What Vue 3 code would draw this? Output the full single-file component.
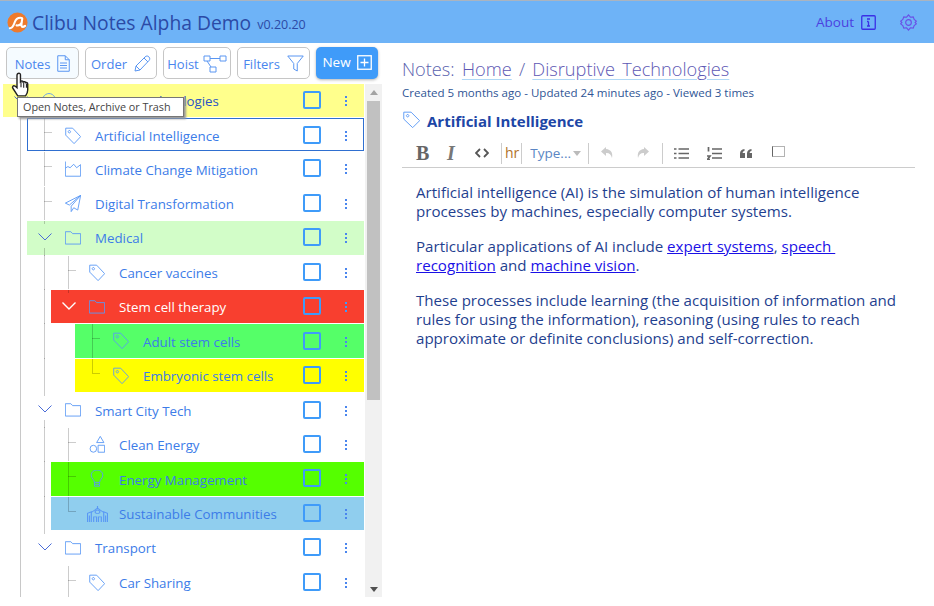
<script setup>
const icons = {
  tag: ['M2 2.500h9.500L22.500 13.500 13.500 22.500 2 11.500z', 'M7 5.500a1.600 1.600 0 1 0 .01 0z'],
  target: ['M12 3a9 9 0 1 0 .01 0z', 'M12 8a4 4 0 1 0 .01 0z'],
  chart: ['M1.500 3v19h21V7l-5.500 4-4-4.500-5 4.500-3-1.500-3.500 2'],
  plane: ['M22.500 1.500 1.500 11.500l5.500 2.500L22.500 1.500 9.500 15.500v7l3.500-5 5.500 3z'],
  folder: ['M1.500 4.500h7.500l2.500 2.500h11v13.500h-21z'],
  shapes: ['M16.500 1.500l5 8h-10z', 'M13.500 13h9v9h-9z', 'M11.500 17.500a4.500 4.500 0 1 1-9 0 4.500 4.500 0 0 1 9 0z'],
  bulb: ['M8.500 17C8.500 14 4 12 4 7.500a8 6.500 0 0 1 16 0C20 12 15.500 14 15.500 17z', 'M8.500 17v5h7v-5', 'M8.500 19.500h7'],
  city: ['M1.500 23V11l4-2v14', 'M22.500 23V11l-4-2v14', 'M5.500 10 12 4l6.500 6', 'M8 23v-7h3v7', 'M13 23v-7h3v7', 'M12 6.500a2.500 2.500 0 1 0 .01 0z', 'M3.500 14v9', 'M20.500 14v9', 'M12 1v3']
}

const rows = [
  { text: 'Disruptive Technologies', level: 0, icon: 'target', chevron: true, bg: '#ffff8c', dark: true },
  { text: 'Artificial Intelligence', level: 1, icon: 'tag', selected: true },
  { text: 'Climate Change Mitigation', level: 1, icon: 'chart' },
  { text: 'Digital Transformation', level: 1, icon: 'plane' },
  { text: 'Medical', level: 1, icon: 'folder', chevron: true, bg: '#d2fdc8', resume: true },
  { text: 'Cancer vaccines', level: 2, icon: 'tag', rails: [1] },
  { text: 'Stem cell therapy', level: 2, icon: 'folder', chevron: true, bg: '#f83f2f', light: true, rails: [1] },
  { text: 'Adult stem cells', level: 3, icon: 'tag', bg: '#55ff68', rails: [1] },
  { text: 'Embryonic stem cells', level: 3, icon: 'tag', bg: '#ffff00', last: true, rails: [1] },
  { text: 'Smart City Tech', level: 1, icon: 'folder', chevron: true, resume: true },
  { text: 'Clean Energy', level: 2, icon: 'shapes', rails: [1] },
  { text: 'Energy Management', level: 2, icon: 'bulb', bg: '#55ff00', rails: [1] },
  { text: 'Sustainable Communities', level: 2, icon: 'city', bg: '#90ceee', last: true, rails: [1] },
  { text: 'Transport', level: 1, icon: 'folder', chevron: true },
  { text: 'Car Sharing', level: 2, icon: 'tag' }
]

const railLeft = (rail, level) => 17 + 24 * (rail - level) + 'px'

const tools = [
  { label: 'Notes', cls: 'w-notes', active: true },
  { label: 'Order', cls: 'w-order' },
  { label: 'Hoist', cls: 'w-hoist' },
  { label: 'Filters', cls: 'w-filters' }
]
</script>

<template>
  <div class="page">
    <header class="topbar">
      <svg class="logo" viewBox="0 0 22 22" aria-hidden="true">
        <circle cx="11" cy="11" r="10.500" fill="#ee7a2c" />
        <path d="M3 17c3 0 4-3 5-6 1-3 3-5 6-5 1 0 2 .3 2 1-.5 3-1 6-.8 7.500.2 1.500 2 1.500 3.800 0M15.500 11c-1 2-3 3.500-5.500 3" fill="none" stroke="#fff" stroke-width="2.200" stroke-linecap="round" />
      </svg>
      <h1 class="brand">Clibu Notes Alpha Demo</h1>
      <span class="version">v0.20.20</span>
      <span class="about">About</span>
      <svg class="info" viewBox="0 0 15 15" aria-hidden="true">
        <rect x=".75" y=".75" width="13.500" height="13.500" rx="1" />
        <path d="M6 4h3M7.500 6.500V11M6 6.500h1.500M6 11h3" />
      </svg>
      <svg class="gear" viewBox="0 0 18 18" aria-hidden="true">
        <path d="M9 1l2 2.400 3-.3 1 2.700 2.300 1.800L16 9l1.300 1.400L15 12.200l-1 2.700-3-.3L9 17l-2-2.400-3 .3-1-2.700L.7 10.400 2 9 .7 7.600 3 5.800l1-2.700 3 .3z" />
        <circle cx="9" cy="9" r="3" />
      </svg>
    </header>

    <main class="main">
      <aside class="side">
        <nav class="toolbar">
          <button v-for="t in tools" :key="t.label" class="tool" :class="[t.cls, { active: t.active }]">
            <span>{{ t.label }}</span>
            <svg v-if="t.label === 'Notes'" class="tool-ico doc" viewBox="0 0 13 17"><path d="M.75.750h7.500l4 4v11.500H.750zM8.250.750v4h4M3 8h7M3 10.500h7M3 13h7" /></svg>
            <svg v-else-if="t.label === 'Order'" class="tool-ico pen" viewBox="0 0 17 17"><path d="M1 16l1-5L11 2c1.500-1.500 3-1.200 4 0s1 2.500 0 3.500L6 15zM2 11l4 4M10 3l4 4" /></svg>
            <svg v-else-if="t.label === 'Hoist'" class="tool-ico hoist" viewBox="0 0 24 18"><path d="M1 1h6v5H1zM17 1h6v5h-6zM7 12h6v5H7zM7 3.500h10M4 6l4 6" /></svg>
            <svg v-else class="tool-ico funnel" viewBox="0 0 17 17"><path d="M.750 1h15.500l-6 7.500v7.500l-3.500-2V8.500z" /></svg>
          </button>
          <button class="new">
            <span>New</span>
            <svg class="plus" viewBox="0 0 15 15"><rect x=".75" y=".75" width="13.500" height="13.500" /><path d="M7.500 3.500v8M3.500 7.500h8" /></svg>
          </button>
        </nav>

        <div class="tree-wrap">
          <div class="tree">
            <div
              v-for="r in rows"
              :key="r.text"
              class="row"
              :class="['lv' + r.level, { selected: r.selected, light: r.light, dark: r.dark, last: r.last, parent: r.chevron }]"
              :style="r.bg ? { background: r.bg } : null"
            >
              <i v-for="rail in r.rails" :key="rail" class="rail" :style="{ left: railLeft(rail, r.level) }"></i>
              <i v-if="r.level > 0" class="guide"></i>
              <i v-if="r.resume" class="resume"></i>
              <i v-if="r.level > 0 && !r.chevron" class="tick"></i>
              <svg v-if="r.chevron" class="chev" viewBox="0 0 14 8"><path d="M.5.500 7 7l6.500-6.500" /></svg>
              <svg class="ico" :class="r.icon" viewBox="1 1 22 22" preserveAspectRatio="none"><path v-for="d in icons[r.icon]" :key="d" :d="d" /></svg>
              <span class="label">{{ r.text }}</span>
              <span class="check"></span>
              <span class="kebab"><b></b><b></b><b></b></span>
            </div>
          </div>
          <div class="scrollbar">
            <i class="arrow up"></i>
            <div class="thumb"></div>
            <i class="arrow down"></i>
          </div>
          <div class="tip">Open Notes, Archive or Trash</div>
        </div>
        <svg class="hand" viewBox="0 0 18 24" aria-hidden="true">
          <path d="M6 1.500c1-.8 2.500-.3 2.500 1V9l.5-.5c1-.5 2 0 2 .7 1-.6 2-.2 2.200.6 1-.4 2 0 2 1.200v5.500c0 2.500-1 4-2 5.500H6L1.500 15c-1-1.500.5-3 2-2l1.800 1.500V3c0-.6.200-1.100.7-1.500z" fill="#fff" stroke="#222" stroke-width="1.300" />
          <path d="M9 9v5M11.500 9.500v5M14 10.500v4" stroke="#222" fill="none" />
        </svg>
      </aside>

      <section class="content">
        <h2 class="crumb">Notes: <a>Home</a> / <a>Disruptive Technologies</a></h2>
        <p class="meta">Created 5 months ago - Updated 24 minutes ago - Viewed 3 times</p>
        <div class="note-title">
          <svg class="note-ico" viewBox="1 1 22 22"><path v-for="d in icons.tag" :key="d" :d="d" /></svg>
          <strong>Artificial Intelligence</strong>
        </div>
        <div class="editbar">
          <span class="e-b">B</span>
          <span class="e-i">I</span>
          <svg class="e-code" viewBox="0 0 14 10"><path d="M5 1 1 5l4 4M9 1l4 4-4 4" /></svg>
          <span class="sep s1"></span>
          <span class="e-hr">hr</span>
          <span class="sep"></span>
          <span class="e-type">Type...<i class="caret"></i></span>
          <span class="sep"></span>
          <svg class="e-hist undo" viewBox="0 0 14 14"><path d="M6 1 1 5.500 6 10V7c3-.3 5 1 6 5 1-5-1-8.500-6-9z" /></svg>
          <svg class="e-hist redo" viewBox="0 0 14 14"><path d="M8 1l5 4.500L8 10V7c-3-.3-5 1-6 5-1-5 1-8.500 6-9z" /></svg>
          <span class="sep s2"></span>
          <svg class="e-list" viewBox="0 0 15 11"><path d="M0 1h2.500M4.500 1H15M0 5.500h2.500M4.500 5.500H15M0 10h2.500M4.500 10H15" /></svg>
          <svg class="e-list ol" viewBox="0 0 15 13"><path d="M5 2h10M5 6.500h10M5 11h10M1.500 0v4.500M0 9h3L.5 12.500H3" /></svg>
          <svg class="e-quote" viewBox="0 0 12 9"><path d="M0 9V4.500C0 2 1.500.5 4.500 0v2C3 2.300 2.700 3 2.700 4h2.300v5zM7 9V4.500C7 2 8.500.5 11.500 0v2C10 2.300 9.700 3 9.700 4H12v5z" /></svg>
          <svg class="e-box" viewBox="0 0 13 11"><path d="M.5.500h12v10H.5z" stroke-dasharray="1 1" /><path d="M.5.500v10" /></svg>
        </div>
        <article class="body">
          <p>Artificial intelligence (AI) is the simulation of human intelligence<br />processes by machines, especially computer systems.</p>
          <p>Particular applications of AI include <a>expert systems</a>, <a>speech <br />recognition</a> and <a>machine vision</a>.</p>
          <p>These processes include learning (the acquisition of information and<br />rules for using the information), reasoning (using rules to reach<br />approximate or definite conclusions) and self-correction.</p>
        </article>
      </section>
    </main>
  </div>
</template>

<style>
html, body { margin: 0; background: #fff; }
</style>

<style scoped>
* { box-sizing: border-box; }
.page { width: 934px; height: 606px; overflow: hidden; font-family: "Open Sans", "Liberation Sans", sans-serif; background: #fff; position: relative; }

.topbar { height: 43px; background: #6eb3f7; border-top: 1px solid #aab4c0; display: flex; align-items: center; padding: 0 17px 0 7px; }
.logo { width: 21px; height: 21px; margin-right: 4px; flex: none; }
.brand { margin: 0; font-size: 19.300px; font-weight: 400; color: #2b4aa6; white-space: nowrap; }
.version { font-size: 12.500px; color: #2b4aa6; margin: 4px 0 0 6px; }
.about { margin-left: auto; font-size: 13.500px; color: #4b3fe0; }
.info { width: 15px; height: 15px; margin-left: 7px; fill: none; stroke: #3a30e6; stroke-width: 1.300; }
.gear { width: 17px; height: 17px; margin-left: 24px; fill: none; stroke: #6a50e6; stroke-width: 1.200; }

.main { display: flex; height: 563px; }
.side { width: 385px; flex: none; position: relative; padding: 4px 0 0 3px; }

.toolbar { display: flex; gap: 6px; padding-left: 3px; height: 32px; }
.tool { height: 32px; border: 1px solid #c6c6c6; border-radius: 5px; background: #fff; display: flex; align-items: center; justify-content: center; gap: 7px; padding: 1px 0 0; font: 13px "Open Sans", sans-serif; color: #4a86ee; }
.tool.active { background: #f5fbff; }
.w-notes { width: 73px; }
.w-order { width: 72px; }
.w-hoist { width: 68px; }
.w-filters { width: 73px; }
.tool-ico { flex: none; fill: none; stroke: #5a96f2; stroke-width: 1; }
.doc { width: 13px; height: 17px; }
.pen { width: 17px; height: 17px; }
.hoist { width: 24px; height: 18px; margin-left: -3px; }
.funnel { width: 17px; height: 17px; }
.new { width: 62px; height: 32px; border: 0; border-radius: 5px; background: #3f9bf9; box-shadow: 0 1px 3px rgba(0,0,0,.3); color: #fff; font: 13.500px "Open Sans", sans-serif; display: flex; align-items: center; justify-content: center; gap: 6px; padding: 0 0 2px; }
.plus { width: 15px; height: 15px; fill: none; stroke: #fff; stroke-width: 1.300; }

.tree-wrap { display: flex; margin-top: 5px; height: 513px; position: relative; }
.tree { width: 361px; height: 513px; overflow: hidden; position: relative; }
.tree::before { content: ""; position: absolute; left: 17px; top: 0; bottom: 0; width: 1px; background: #c8c8c8; }

.row { position: relative; height: 33.400px; margin-bottom: 1.050px; display: flex; align-items: center; font-size: 13.300px; color: #3c7ce8; z-index: 0; }
.lv0 { margin-left: 0; }
.lv1 { margin-left: 24px; }
.lv2 { margin-left: 48px; }
.lv3 { margin-left: 72px; }
.selected { border: 1px solid #2f6fd0; margin-top: .6px; height: 32.800px; }
.light { color: #fff; }
.dark { color: #2b54c4; }

.rail, .guide, .resume { position: absolute; width: 1px; background: rgba(0,0,0,.2); }
.rail { top: -1px; bottom: -1px; }
.guide { left: 17px; top: 0; bottom: 0; }
.parent .guide { bottom: auto; height: 3px; }
.last .guide { bottom: auto; height: 14px; }
.resume { left: 17px; top: 27px; bottom: -1px; }
.tick { position: absolute; left: 17px; top: 14px; width: 8px; height: 1px; background: rgba(0,0,0,.2); }
.selected .guide { left: 16px; top: -1px; bottom: -1px; }
.selected .tick { left: 16px; top: 13px; }

.chev { position: absolute; left: 11px; top: 12px; width: 14px; height: 8px; fill: none; stroke: #4a6cd8; stroke-width: 1; }
.light .chev { stroke: #fff; stroke-width: 1.400; }
.ico { position: absolute; left: 38px; top: 8px; width: 16px; height: 17px; fill: none; stroke: #5a98f5; stroke-width: 1.200; }
.selected .ico { left: 37px; }
.ico.city { left: 36px; width: 21px; height: 16px; top: 9px; }
.label { position: absolute; left: 68px; white-space: nowrap; top: 8.300px; line-height: 18px; }
.selected .label { left: 67px; top: 8px; }
.check { position: absolute; right: 43px; top: 7.200px; width: 18px; height: 18px; border: 2.400px solid #3f9bf9; border-radius: 2px; }
.selected .check { right: 42px; top: 6.600px; }
.kebab { position: absolute; right: 17px; top: 12.200px; display: flex; flex-direction: column; gap: 2px; }
.selected .kebab { right: 16px; top: 12px; }
.kebab b { width: 2px; height: 2px; background: #4a86ee; display: block; }
.light .kebab b { background: #3f9bf9; }

.scrollbar { width: 17px; height: 513px; margin-left: 1px; background: #f1f1f1; display: flex; flex-direction: column; align-items: center; }
.arrow { width: 0; height: 0; border-left: 4px solid transparent; border-right: 4px solid transparent; }
.arrow.up { border-bottom: 5px solid #a3a3a3; margin-top: 6px; }
.arrow.down { border-top: 5px solid #505050; margin-top: auto; margin-bottom: 5px; }
.thumb { width: 13px; height: 299px; background: #c1c1c1; margin-top: 6px; }

.tip { position: absolute; left: 14px; top: 13px; height: 20px; width: 167px; background: #fff; border: 1px solid #767676; box-shadow: 2px 2px 2px #999; font-size: 10.800px; line-height: 18px; color: #444; padding-left: 5px; white-space: nowrap; z-index: 2; }
.hand { position: absolute; left: 11px; top: 29px; width: 20px; height: 26px; z-index: 3; }

.content { flex: 1; padding: 12px 19px 0 17px; min-width: 0; }
.crumb { margin: 0; font-size: 18.200px; font-weight: 300; color: #5a62ae; line-height: 28px; white-space: nowrap; word-spacing: 2.500px; }
.crumb a { color: #5e58b4; text-decoration: underline; text-decoration-color: #b0d8f6; text-underline-offset: 3px; }
.meta { margin: 2px 0 0; font-size: 11.550px; line-height: 15px; color: #2f5595; white-space: nowrap; }
.note-title { display: flex; align-items: center; gap: 7px; margin-top: 11px; height: 20px; color: #1d46a6; font-size: 15px; }
.note-title strong { font-weight: 700; }
.note-ico { width: 17px; height: 17px; margin-left: 1px; fill: none; stroke: #5a98f5; stroke-width: 1.200; margin-top: -3px; }

.editbar { height: 28px; margin-top: 9px; border-bottom: 1px solid #ccc; display: flex; align-items: center; padding: 0 0 1px 14px; color: #666; position: relative; }
.sep { width: 1px; height: 21px; background: #ccc; margin: 0 2px; flex: none; }
.s1 { margin-left: 12px; }
.e-b { font: 700 20px "Liberation Serif", serif; width: 14px; color: #666; }
.e-i { font: italic 700 20px "Liberation Serif", serif; color: #777; width: 8px; margin-left: 17px; }
.e-code { width: 14px; height: 10px; margin-left: 20px; fill: none; stroke: #555; stroke-width: 1.800; }
.e-hr { font-size: 14px; color: #b0722a; padding: 0 0 1px 1px; }
.e-type { font-size: 13.500px; color: #5b86c4; padding-left: 6px; display: flex; align-items: center; }
.caret { width: 0; height: 0; border-left: 4px solid transparent; border-right: 4px solid transparent; border-top: 5px solid #bbb; margin-left: 2px; }
.e-type + .sep { margin-left: 7px; }
.e-hist { width: 14px; height: 14px; fill: #ccc; margin-left: 9px; }
.redo { margin-left: 22px; }
.s2 { margin-left: 12px; }
.e-list { width: 15px; height: 11px; margin-left: 9px; fill: none; stroke: #666; stroke-width: 1.700; }
.e-list.ol { height: 13px; margin-left: 18px; }
.e-quote { width: 12px; height: 9px; margin-left: 18px; fill: #666; }
.e-box { width: 13px; height: 11px; margin-left: 20px; margin-top: -3px; fill: none; stroke: #666; stroke-width: 1; }

.body { padding: 15px 0 0 14px; font-size: 15.100px; line-height: 19px; color: #1f3f8f; white-space: nowrap; }
.body p { margin: 0 0 16px; }
.body a { color: #1a10e6; text-decoration: underline; white-space: pre; }
</style>
